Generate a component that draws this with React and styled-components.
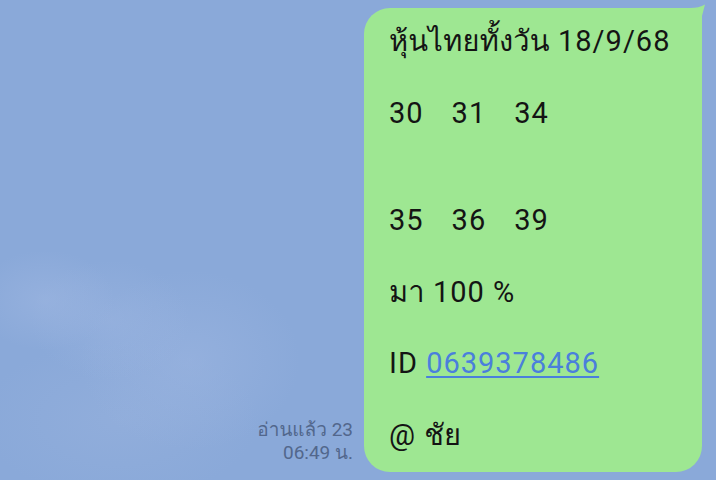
import React from "react";
import styled, { createGlobalStyle } from "styled-components";

const Global = createGlobalStyle`
  html, body { margin: 0; padding: 0; }
  body {
    width: 716px;
    height: 480px;
    overflow: hidden;
    font-family: Roboto, Loma, "Noto Sans Thai Looped", sans-serif;
  }
`;

const Screen = styled.div`
  width: 716px;
  height: 480px;
  background-color: #8aa9d9;
  background-image:
    radial-gradient(ellipse 70px 50px at 45px 300px, rgba(160, 184, 226, 0.5), rgba(160, 184, 226, 0) 100%),
    radial-gradient(ellipse 80px 60px at 110px 320px, rgba(160, 184, 226, 0.4), rgba(160, 184, 226, 0) 100%),
    radial-gradient(ellipse 110px 90px at 190px 360px, rgba(160, 184, 226, 0.45), rgba(160, 184, 226, 0) 100%),
    radial-gradient(ellipse 140px 80px at 120px 420px, rgba(155, 180, 222, 0.4), rgba(155, 180, 222, 0) 100%);
  display: flex;
  justify-content: flex-end;
  align-items: flex-start;
  padding: 8px 14px 0 0;
  box-sizing: border-box;
`;

const Row = styled.div`
  display: flex;
  align-items: flex-end;
  gap: 11px;
`;

const Meta = styled.div`
  display: flex;
  flex-direction: column;
  align-items: flex-end;
  font-size: 19px;
  line-height: 23px;
  color: #52678c;
  padding-bottom: 8px;
  white-space: nowrap;
`;

const Bubble = styled.div`
  position: relative;
  width: 338px;
  height: 464px;
  box-sizing: border-box;
  background: #9ee792;
  border-radius: 26px;
  border-top-right-radius: 0;
  padding: 16px 16px 0 25px;
  color: #141414;
  font-size: 29px;
  line-height: 35.8px;
  letter-spacing: 1px;
  white-space: pre;
`;

const Tail = styled.svg`
  position: absolute;
  top: -4px;
  right: -4px;
  width: 28px;
  height: 28px;
`;

const Line = styled.div`
  height: 35.8px;
`;

const Numbers = styled.div`
  height: 35.8px;
  display: flex;
  gap: 28px;
`;

const Thai = styled.span`
  letter-spacing: 0.2px;
`;

const Link = styled.span`
  color: #4a7fdc;
  text-decoration: underline;
  text-decoration-thickness: 2px;
  text-underline-offset: 3px;
`;

const first = ["30", "31", "34"];
const second = ["35", "36", "39"];

export default function App() {
  return (
    <>
      <Global />
      <Screen>
        <Row>
          <Meta>
            <span>อ่านแล้ว 23</span>
            <span>06:49 น.</span>
          </Meta>
          <Bubble>
            <Tail viewBox="0 0 28 28">
              <path d="M0 4 L12 4 Q21 4 27 0.5 Q25.5 6 24 12 L24 28 L0 28 Z" fill="#9ee792" />
            </Tail>
            <Line>
              <Thai>หุ้นไทยทั้งวัน</Thai> 18/9/68
            </Line>
            <Line />
            <Numbers>
              {first.map((n) => (
                <span key={n}>{n}</span>
              ))}
            </Numbers>
            <Line />
            <Line />
            <Numbers>
              {second.map((n) => (
                <span key={n}>{n}</span>
              ))}
            </Numbers>
            <Line />
            <Line>
              <Thai>มา</Thai> 100 %
            </Line>
            <Line />
            <Line>
              ID <Link>0639378486</Link>
            </Line>
            <Line />
            <Line>
              @ <Thai>ชัย</Thai>
            </Line>
          </Bubble>
        </Row>
      </Screen>
    </>
  );
}
